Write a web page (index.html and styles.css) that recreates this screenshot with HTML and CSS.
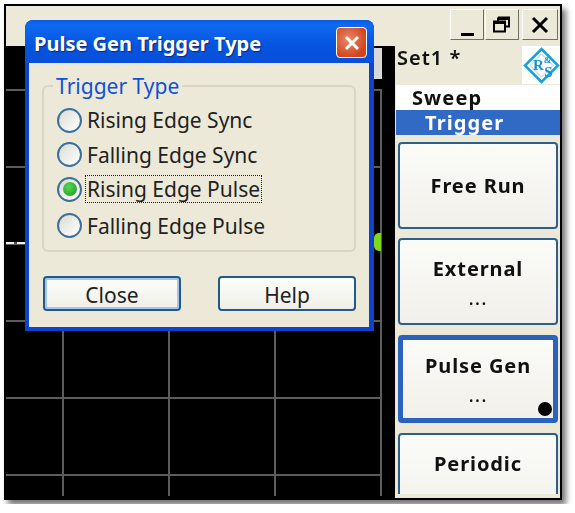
FILE: index.html
```html
<!DOCTYPE html>
<html lang="en">
<head>
  <meta charset="UTF-8">
  <title>Pulse Gen Trigger Type</title>
  <link rel="stylesheet" href="styles.css">
</head>
<body>
  <div class="frame">
    <div class="topbar">
      <button class="winbtn"><span class="min-glyph"></span></button>
      <button class="winbtn">
        <svg width="24" height="22" viewBox="0 0 24 22"><path d="M8 3.500h11v9h-4M8 3.500v4M4 7.500h11v10H4z M4 9h11M8 5h11" fill="none" stroke="#000" stroke-width="2"/></svg>
      </button>
      <button class="winbtn close-win">
        <svg width="22" height="22" viewBox="0 0 22 22"><path d="M4 4l14 14M18 4L4 18" stroke="#000" stroke-width="3"/></svg>
      </button>
    </div>
    <div class="main">
      <div class="plot">
        <div class="plot-tab"></div>
        <div class="grid"></div>
        <div class="plot-dash"></div>
        <div class="plot-marker"></div>
      </div>
      <div class="side">
        <div class="side-head">
          <span class="set-name">Set1 *</span>
          <div class="logo">
            <svg width="37" height="37" viewBox="0 0 37 37">
              <path d="M18.500 2L35 18.500L18.500 35L2 18.500Z" fill="#fff" stroke="#18a0dc" stroke-width="2.500"/>
              <path d="M7 18.500L18.500 7L30 18.500L18.500 30Z" fill="none" stroke="#8fd3f0" stroke-width="1"/>
              <text x="10" y="23" class="logo-text">R<tspan class="logo-amp" dy="-7">&amp;</tspan><tspan dx="-7" dy="14">S</tspan></text>
            </svg>
          </div>
        </div>
        <div class="menu-item">Sweep</div>
        <div class="menu-item menu-sel">Trigger</div>
        <div class="softkeys">
          <div class="softkey softkey-one">Free Run</div>
          <div class="softkey">External<span class="dots">...</span></div>
          <div class="softkey softkey-on">Pulse Gen<span class="dots">...</span><i class="dot"></i></div>
          <div class="softkey softkey-cut">Periodic<span class="dots">...</span></div>
        </div>
      </div>
    </div>

    <div class="dialog">
      <div class="titlebar">
        <span class="title-text">Pulse Gen Trigger Type</span>
        <div class="x-btn">
          <svg width="20" height="20" viewBox="0 0 20 20"><path d="M4 4l12 12M16 4L4 16" stroke="#fff" stroke-width="3"/></svg>
        </div>
      </div>
      <div class="dialog-body">
        <fieldset class="group">
          <legend>Trigger Type</legend>
          <div class="radio"><i class="circle"></i><span>Rising Edge Sync</span></div>
          <div class="radio"><i class="circle"></i><span>Falling Edge Sync</span></div>
          <div class="radio"><i class="circle checked"></i><span class="focused">Rising Edge Pulse</span></div>
          <div class="radio"><i class="circle"></i><span>Falling Edge Pulse</span></div>
        </fieldset>
        <div class="dialog-btns">
          <button class="xpbtn xpbtn-default">Close</button>
          <button class="xpbtn">Help</button>
        </div>
      </div>
    </div>
  </div>
</body>
</html>
```

FILE: styles.css
```css
html, body { margin: 0; background: #fff; }
body { padding: 4px; font-family: "Noto Sans", "Liberation Sans", sans-serif; }

.frame {
  position: relative;
  box-sizing: border-box;
  width: 558px; height: 496px;
  border: 2px solid #000;
  background: #ece9d8;
  box-shadow: 4px 5px 6px rgba(0,0,0,.55);
  display: flex; flex-direction: column;
  filter: blur(.45px);
}

.topbar {
  height: 40px;
  flex: none;
  display: flex; justify-content: flex-end; align-items: flex-start;
  padding: 3px 2px 0 0;
  box-sizing: border-box;
}
.winbtn {
  width: 34px; height: 31px;
  margin-left: 1px; padding: 0;
  background: #ece9d8;
  border: 1px solid #fff;
  border-right-color: #716f64; border-bottom-color: #716f64;
  display: flex; align-items: center; justify-content: center;
}
.close-win { margin-left: 3px; width: 36px; }
.min-glyph { width: 13px; height: 3px; background: #000; margin-top: 19px; }

.main { flex: 1; display: flex; min-height: 0; }

/* grid starts below the top margin of the trace area */
.plot {
  position: relative;
  width: 389px;
  box-sizing: border-box;
  padding: 43px 0 2px;
  background: #000;
  display: flex;
}
.grid {
  width: 376px;
  background-image:
    repeating-linear-gradient(90deg, transparent 0 56px, #5c5c5c 56px 58px, transparent 58px 106px),
    repeating-linear-gradient(180deg, #5c5c5c 0 2px, transparent 2px 77px);
}
.plot-tab {
  position: absolute;
  left: 367px; top: 2px;
  width: 9px; height: 31px;
  background: #d8d8d8;
}
.plot-dash {
  position: absolute;
  left: 0; top: 196px;
  width: 19px; height: 2px;
  background: repeating-linear-gradient(90deg, #eee 0 8px, #555 8px 11px);
}
.plot-marker {
  position: absolute;
  left: 368px; top: 187px;
  width: 7px; height: 18px;
  background: #7fd81e;
  border-radius: 5px 0 0 5px;
}

.side { flex: 1; min-width: 0; }
.side-head {
  height: 39px;
  display: flex; justify-content: space-between; align-items: flex-start;
  padding-left: 2px;
}
.set-name { font-size: 20px; font-weight: 600; color: #111; line-height: 24px; letter-spacing: 1px; }
.logo { width: 38px; height: 38px; background: #fff; display: flex; align-items: center; justify-content: center; }
.logo-text { font: bold 15px "Liberation Serif", serif; fill: #1b8fd0; }
.logo-amp { font-size: 9px; }

.menu-item {
  height: 25px; line-height: 26px;
  margin-left: 1px;
  padding-left: 16px;
  background: #fff;
  color: #111;
  font-size: 20px; font-weight: 700; letter-spacing: 1.100px;
}
.menu-sel { background: #316ac5; color: #fff; padding-left: 29px; }

.softkeys {
  display: flex; flex-direction: column; gap: 9px;
  padding: 7px 2px 0 3px;
  height: 359px;
  box-sizing: border-box;
  overflow: hidden;
}
.softkey {
  position: relative;
  flex: none;
  box-sizing: border-box;
  height: 87px;
  padding-top: 14px;
  border: 2px solid #2d5f8d;
  border-radius: 4px;
  background: linear-gradient(#fbfbf8, #f1f0ea);
  color: #111;
  text-align: center;
  font-size: 20px; font-weight: 700; letter-spacing: .9px;
  line-height: 30px;
}
.softkey .dots { display: block; font-weight: normal; line-height: 28px; letter-spacing: 1px; }
.softkey-one { padding-top: 27px; }
.softkey-on { border: 5px solid #2a62bd; padding-top: 11px; margin-top: 1px; height: 88px; }
.softkey-cut { margin-top: 1px; height: 100px; }
.dot {
  position: absolute; right: 1px; bottom: 2px;
  width: 14px; height: 14px;
  border-radius: 50%;
  background: #000;
}

.dialog {
  position: absolute;
  left: 19px; top: 14px;
  width: 349px; height: 311px;
  box-sizing: border-box;
  border-radius: 8px 8px 0 0;
  background: #0a45cc;
  display: flex; flex-direction: column;
}
.titlebar {
  height: 43px;
  flex: none;
  display: flex; align-items: center; justify-content: space-between;
  padding: 0 7px 0 9px;
  border-radius: 8px 8px 0 0;
  background: linear-gradient(#0a5ae6 0, #1069f0 12%, #0454e0 60%, #0a4fd8 100%);
  color: #fff;
  font-size: 20px; font-weight: 700;
  line-height: 24px;
  text-shadow: 1px 1px 1px #0a2a80;
}
.title-text { margin-top: 5px; }
.x-btn {
  width: 31px; height: 31px;
  margin-top: 2px;
  border: 1px solid #fff;
  border-radius: 4px;
  box-sizing: border-box;
  background: radial-gradient(circle at 40% 40%, #e88a6a, #d2421c 75%);
  display: flex; align-items: center; justify-content: center;
}
.dialog-body {
  flex: 1;
  margin: 0 5px 4px 4px;
  background: #ece9d8;
  padding: 11px 13px 0;
  display: flex; flex-direction: column;
}
.group {
  margin: 0; padding: 0 0 0 13px;
  height: 178px;
  box-sizing: border-box;
  border: 2px solid #d8d5c2;
  border-radius: 6px;
}
.group legend {
  padding: 0 3px;
  margin-left: -4px;
  font-size: 21px;
  color: #0f51d6;
  line-height: 24px;
}
.radio {
  display: flex; align-items: center; gap: 3px;
  height: 34.500px;
  font-size: 21px;
  color: #222;
}
.radio:first-of-type { margin-top: 5px; }
.radio:last-of-type { margin-top: 2px; }
.radio span { padding: 0 1px; border: 1px dotted transparent; line-height: 26px; }
.radio .focused { border-color: #222; }
.circle {
  flex: none;
  box-sizing: border-box;
  width: 25px; height: 25px;
  border: 2px solid #3c6f9c;
  border-radius: 50%;
  background: linear-gradient(135deg, #dcdcd4, #fff);
  display: flex; align-items: center; justify-content: center;
}
.circle.checked::after {
  content: "";
  width: 14px; height: 14px;
  border-radius: 50%;
  background: radial-gradient(circle at 40% 35%, #55d855, #179a1f);
}
.dialog-btns {
  display: flex; justify-content: space-between;
  margin-top: 24px;
  padding: 0 0 0 1px;
}
.xpbtn {
  width: 138px; height: 35px;
  padding: 3px 0 0;
  border: 2px solid #1e5a8c;
  border-radius: 4px;
  background: linear-gradient(#fefefc, #efeee6);
  color: #222;
  font: 21px/24px "Noto Sans", "Liberation Sans", sans-serif;
}
.xpbtn-default { box-shadow: inset 0 0 0 2px #a9c4ea; }
```
